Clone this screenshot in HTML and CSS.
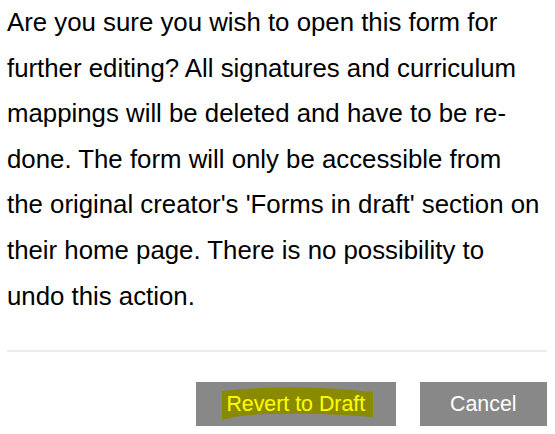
FILE: index.html
```html
<!DOCTYPE html>
<html lang="en">
<head>
<meta charset="utf-8">
<title>Revert to Draft</title>
<link rel="stylesheet" href="styles.css">
</head>
<body>
<div class="dialog">
  <p class="message">Are you sure you wish to open this form for further editing? All signatures and curriculum mappings will be deleted and have to be re-done. The form will only be accessible from the original creator's 'Forms in draft' section on their home page. There is no possibility to undo this action.</p>
  <hr class="divider">
  <div class="actions">
    <button class="btn btn-revert" type="button">
      <svg class="mark" width="200" height="44" viewBox="0 0 200 44" aria-hidden="true">
        <path d="M26 9 Q95 1 177 10 L177 35 Q120 30 70 32 Q42 33 26 38 Z" fill="#8a8a00"/>
      </svg>
      <span class="btn-label">Revert to Draft</span>
    </button>
    <button class="btn" type="button"><span class="btn-label">Cancel</span></button>
  </div>
</div>
</body>
</html>
```

FILE: styles.css
```css
html, body {
  margin: 0;
  padding: 0;
  background: #ffffff;
}

.dialog {
  margin: 0 8px 0 7px;
  font-family: "Liberation Sans", Arial, sans-serif;
}

.message {
  margin: 0;
  padding-right: 5px;
  font-size: 25.8px;
  line-height: 45.6px;
  color: #000000;
}

.divider {
  margin: 31px 0 0 0;
  border: 0;
  height: 2px;
  background: #ececec;
}

.actions {
  display: flex;
  justify-content: flex-end;
  gap: 24px;
  margin-top: 30px;
}

.btn {
  position: relative;
  height: 44px;
  padding: 0 30.5px;
  border: 0;
  border-radius: 0;
  background: #888888;
  color: #ffffff;
  font-family: "Liberation Sans", Arial, sans-serif;
  font-size: 21.33px;
  line-height: 44px;
  cursor: pointer;
}

.btn-revert {
  color: #ffff00;
}

.mark {
  position: absolute;
  left: 0;
  top: 0;
}

.btn-label {
  position: relative;
}
```
